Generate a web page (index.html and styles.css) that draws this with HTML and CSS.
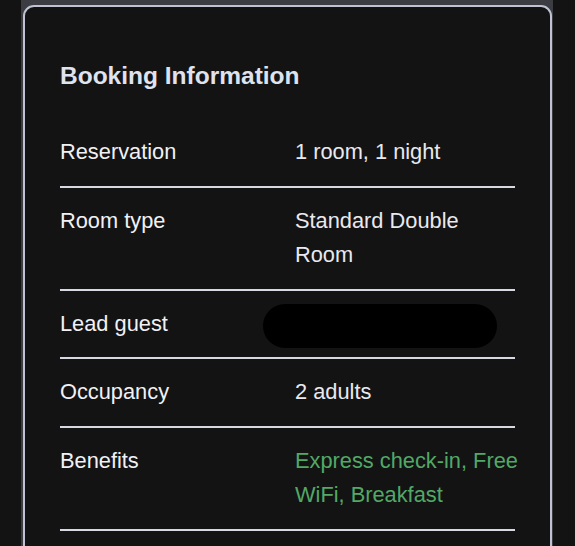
FILE: index.html
```html
<!DOCTYPE html>
<html lang="en">
<head>
  <meta charset="UTF-8" />
  <meta name="viewport" content="width=device-width, initial-scale=1.0" />
  <title>Booking Information</title>
  <link rel="stylesheet" href="styles.css">
</head>
<body>
  <div class="frame">
    <section class="card">
      <h2>Booking Information</h2>

      <div class="info-list">
        <div class="info-row">
          <span class="label">Reservation</span>
          <span class="value">1 room, 1 night</span>
        </div>
        <div class="info-row">
          <span class="label">Room type</span>
          <span class="value">Standard Double Room</span>
        </div>
        <div class="info-row">
          <span class="label">Lead guest</span>
          <span class="value"><span class="redacted"></span></span>
        </div>
        <div class="info-row">
          <span class="label">Occupancy</span>
          <span class="value">2 adults</span>
        </div>
        <div class="info-row">
          <span class="label">Benefits</span>
          <span class="value benefits">Express check-in, Free WiFi, Breakfast</span>
        </div>
      </div>
    </section>
  </div>
</body>
</html>
```

FILE: styles.css
```css
body {
  margin: 0;
  background: #131313;
  font-family: 'Liberation Sans', Arial, sans-serif;
  color: #eeeef3;
  overflow: hidden;
}

.frame {
  margin-left: 21px;
  width: 532px;
  padding: 5px 1px 0 2px;
  box-sizing: border-box;
  background: #3b3d42;
  min-height: 600px;
}

.card {
  background: #131313;
  border: 2px solid #bfc2d1;
  border-radius: 11px;
  padding: 54px 35px 60px;
  min-height: 600px;
}

h2 {
  margin: 0 0 28px;
  font-size: 24.5px;
  line-height: 30px;
  font-weight: bold;
  color: #dfe2ef;
}

.info-row {
  display: grid;
  grid-template-columns: 235px 227px;
  padding: 16px 0;
  border-bottom: 2px solid #d6d8e2;
  font-size: 21.8px;
  line-height: 34.5px;
}

.label {
  color: #f1f1f5;
}

.value {
  color: #e9e9ef;
}

.benefits {
  color: #52a867;
}

.redacted {
  display: block;
  width: 234px;
  height: 44px;
  margin: -3px 0 -7px -32px;
  border-radius: 22px;
  background: #000;
}
```
